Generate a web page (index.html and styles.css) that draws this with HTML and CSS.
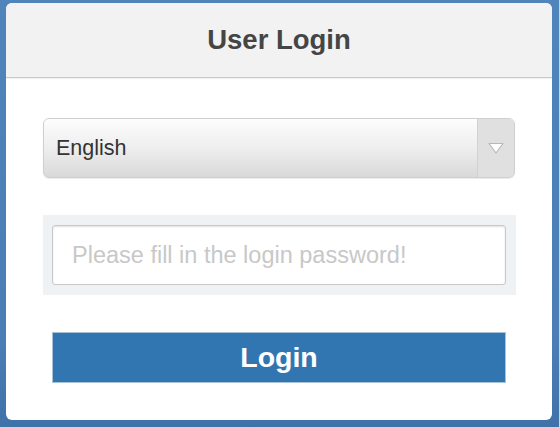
FILE: index.html
```html
<!DOCTYPE html>
<html>
<head>
<meta charset="utf-8">
<link rel="stylesheet" href="styles.css">
</head>
<body>
<div class="card">
  <div class="header">User Login</div>
  <div class="content">
    <div class="select">
      <span class="select-text">English</span>
      <span class="select-arrow">
        <svg width="16" height="12" viewBox="0 0 16 12"><path d="M1 1.5 L15 1.5 L8 11 Z" fill="#fff" stroke="#b9b9b9" stroke-width="1.2" stroke-linejoin="round"/></svg>
      </span>
    </div>
    <div class="pw-wrap">
      <input class="pw" type="password" placeholder="Please fill in the login password!">
    </div>
    <button class="login-btn">Login</button>
  </div>
</div>
</body>
</html>
```
FILE: styles.css
```css
html, body {
  margin: 0;
  padding: 0;
}
body {
  width: 559px;
  height: 427px;
  background: linear-gradient(180deg, #4f85bb 0%, #4a7eb5 80%, #3f72a8 100%);
  padding: 3px 7px 7px 6px;
  box-sizing: border-box;
  font-family: "Liberation Sans", Arial, sans-serif;
}
.card {
  width: 546px;
  height: 417px;
  background: #fff;
  border-radius: 6px;
  overflow: hidden;
  display: flex;
  flex-direction: column;
}
.header {
  height: 74px;
  background: #f2f2f2;
  border-bottom: 1px solid #c9c9c9;
  box-shadow: 0 1px 1px rgba(0,0,0,0.05);
  display: flex;
  align-items: center;
  justify-content: center;
  font-size: 27.5px;
  font-weight: bold;
  color: #454545;
}
.content {
  padding: 40px 0 0 37px;
  display: flex;
  flex-direction: column;
}
.select {
  width: 472px;
  height: 60px;
  box-sizing: border-box;
  border: 1px solid #cfcfcf;
  border-radius: 6px;
  background: linear-gradient(180deg, #fdfdfd 0%, #eeeeee 50%, #d9d9d9 100%);
  display: flex;
  align-items: stretch;
  box-shadow: 0 1px 1px rgba(0,0,0,0.08);
}
.select-text {
  flex: 1;
  display: flex;
  align-items: center;
  padding-left: 12px;
  font-size: 21.5px;
  color: #333;
}
.select-arrow {
  width: 36px;
  border-left: 1px solid #d2d2d2;
  background: #e0e0e0;
  border-radius: 0 5px 5px 0;
  display: flex;
  align-items: center;
  justify-content: center;
}
.pw-wrap {
  margin-top: 37px;
  width: 473px;
  height: 80px;
  box-sizing: border-box;
  background: #eef2f5;
  padding: 10px 10px 10px 9px;
}
.pw {
  width: 100%;
  height: 60px;
  box-sizing: border-box;
  border: 1px solid #c8c8c8;
  border-radius: 3px;
  box-shadow: inset 0 1px 2px rgba(0,0,0,0.12);
  background: #fff;
  padding: 0 0 0 19px;
  font-family: "Liberation Sans", Arial, sans-serif;
  font-size: 23.5px;
  color: #333;
  outline: none;
}
.pw::placeholder {
  color: #c8c8c8;
}
.login-btn {
  margin-top: 37px;
  margin-left: 9px;
  width: 454px;
  height: 51px;
  box-sizing: border-box;
  background: #3276b1;
  border: 1px solid #a9c3d6;
  border-radius: 0;
  color: #fff;
  font-family: "Liberation Sans", Arial, sans-serif;
  font-size: 28.5px;
  font-weight: bold;
  padding: 0;
  cursor: pointer;
}
```
